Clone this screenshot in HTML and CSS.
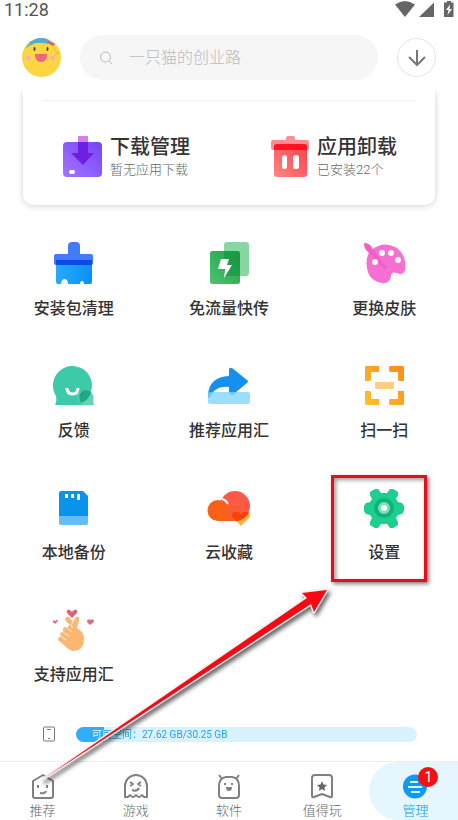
FILE: index.html
```html
<!DOCTYPE html>
<html lang="zh-CN">
<head>
    <meta charset="UTF-8">
    <meta name="viewport" content="width=device-width, initial-scale=1.0">
    <title>管理</title>
    <link rel="stylesheet" href="styles.css">
</head>
<body>
    <div class="status-bar">
        <span class="clock">11:28</span>
        <svg class="status-icons" width="60" height="18" viewBox="0 0 60 18" fill="#666">
            <path d="M1 4.500Q11 -2.500 21 4.500L11 17Z"/>
            <path d="M25 17L40 2.500V17Z"/>
            <path d="M50 2.500H53V1H57V2.500H59.500V17H50Z"/>
            <path d="M56 4.500L52 10H54.500L53.500 15L58 9H55.500Z" fill="#fff"/>
        </svg>
    </div>

    <header class="header">
        <a href="#" class="avatar" aria-label="我的">
            <svg width="39" height="39" viewBox="0 0 39 39">
                <circle cx="19.500" cy="19.500" r="19.500" fill="#fbd641"/>
                <path d="M3 11Q5 6 9 3L12 6Q7 8 3 11Z" fill="#8fc55c"/>
                <path d="M8 4Q19 -4 28 3L26 6Q17 3 7 7Z" fill="#55a9dc"/>
                <path d="M27 3L33 6L31 8L26 5Z" fill="#c85a86"/>
                <path d="M31 8L35 15L38 15M35 15L32 18" fill="none" stroke="#f4b545"/>
                <ellipse cx="12.500" cy="11" rx="1" ry="2" fill="#5a3320"/>
                <ellipse cx="25.500" cy="11" rx="1" ry="2" fill="#5a3320"/>
                <path d="M13 16H25Q25 24 19 24Q13 24 13 16Z" fill="#ee6480"/>
                <circle cx="6.500" cy="20" r="2.500" fill="#f8b0a8"/>
                <circle cx="30.500" cy="20" r="2.500" fill="#f8b0a8"/>
            </svg>
        </a>
        <label class="search">
            <svg width="14" height="14" viewBox="0 0 14 14" fill="none" stroke="#bbb">
                <circle cx="6.500" cy="6" r="5"/>
                <path d="M10 10L13 13"/>
            </svg>
            <input type="text" placeholder="一只猫的创业路" aria-label="搜索">
        </label>
        <button type="button" class="download-btn" aria-label="下载">
            <svg width="20" height="20" viewBox="0 0 20 20" fill="none" stroke="#777" stroke-width="2">
                <path d="M10 2V17M2 9L10 17L18 9"/>
            </svg>
        </button>
    </header>

    <main class="main">
        <section class="card">
            <a href="#" class="card-item">
                <svg width="40" height="42" viewBox="0 0 40 42">
                    <defs>
                        <linearGradient id="purple" x1="1" y1="0" x2="0" y2="1">
                            <stop offset="0" stop-color="#7344f7"/>
                            <stop offset="1" stop-color="#a575ff"/>
                        </linearGradient>
                    </defs>
                    <rect x="1" y="6" width="39" height="35" rx="4" fill="url(#purple)"/>
                    <path d="M16 0H26V6H16Z" fill="#d680ea"/>
                    <path d="M16 6H26V17H32L21 29L9 17H16Z" fill="#6f1fe0"/>
                    <rect x="7" y="34" width="6" height="4" rx="2" fill="#fff"/>
                </svg>
                <span class="card-text">
                    <strong>下载管理</strong>
                    <small>暂无应用下载</small>
                </span>
            </a>
            <a href="#" class="card-item">
                <svg width="40" height="42" viewBox="0 0 40 42">
                    <defs>
                        <linearGradient id="red" x1="1" y1="0" x2="0" y2="1">
                            <stop offset="0" stop-color="#fb3f4b"/>
                            <stop offset="1" stop-color="#ff8582"/>
                        </linearGradient>
                    </defs>
                    <path d="M4 4H17V2Q17 0 19 0H24Q26 0 26 2V4H38Q40 4 40 6V12Q40 14 38 14H4Q2 14 2 12V6Q2 4 4 4Z" fill="#fc8d92"/>
                    <rect x="5" y="8" width="33" height="33" rx="3" fill="url(#red)"/>
                    <path d="M5 14V11Q5 8 8 8H35Q38 8 38 11V14Z" fill="#fb1522"/>
                    <rect x="13" y="19" width="5" height="14" rx="2.500" fill="#fff"/>
                    <rect x="24" y="19" width="6" height="14" rx="2.500" fill="#fff"/>
                </svg>
                <span class="card-text">
                    <strong>应用卸载</strong>
                    <small>已安装22个</small>
                </span>
            </a>
        </section>

        <nav class="tools">
            <a href="#" class="tool">
                <svg viewBox="0 0 44 44">
                    <defs>
                        <linearGradient id="blue">
                            <stop offset="0" stop-color="#27a9ff"/>
                            <stop offset="1" stop-color="#0a91f8"/>
                        </linearGradient>
                    </defs>
                    <path d="M16 12V4Q16 0 20 0H24Q28 0 28 4V12H39Q41 12 41 14V21Q41 23 39 23H4Q2 23 2 21V14Q2 12 4 12Z" fill="#417bfb"/>
                    <path d="M4 18H40V40Q40 42 38 42H32C32 38 28 38 28 42H16C16 35 9 36 9 42H6Q4 42 4 40Z" fill="url(#blue)"/>
                    <path d="M4 18H40V23H4Z" fill="#0b4be5"/>
                </svg>
                <span>安装包清理</span>
            </a>
            <a href="#" class="tool">
                <svg viewBox="0 0 44 44">
                    <defs>
                        <linearGradient id="green" x1="1" y1="0" x2="0" y2="1">
                            <stop offset="0" stop-color="#159440"/>
                            <stop offset="1" stop-color="#58c979"/>
                        </linearGradient>
                    </defs>
                    <rect x="17" y="0" width="25" height="34" rx="3" fill="#88d7a2"/>
                    <rect x="3" y="9" width="30" height="33" rx="3" fill="#35b45b"/>
                    <rect x="3" y="9" width="30" height="33" rx="3" fill="url(#green)" opacity=".7"/>
                    <path d="M17 9H30Q33 9 33 12V34H20Q17 34 17 31Z" fill="#12973e" opacity=".6"/>
                    <path d="M14 17H22L20 23H25L17 36L18 27H11Z" fill="#fff"/>
                </svg>
                <span>免流量快传</span>
            </a>
            <a href="#" class="tool">
                <svg viewBox="0 0 44 44">
                    <path d="M9 8Q22 -2 35 6Q45 14 43 28Q41 34 35 31Q29 29 29 34Q28 42 20 41Q7 39 5 26Q3 15 9 8Z" fill="#f66fd2"/>
                    <path d="M2 1Q8 1 10 6L25 26L23 28L6 10Q2 7 2 1Z" fill="#f25fc4"/>
                    <circle cx="20" cy="11" r="3" fill="#fff"/>
                    <circle cx="29" cy="11" r="3" fill="#fff"/>
                    <circle cx="36" cy="18" r="3" fill="#fff"/>
                    <circle cx="13" cy="20" r="3" fill="#fff"/>
                </svg>
                <span>更换皮肤</span>
            </a>
            <a href="#" class="tool">
                <svg viewBox="0 0 44 44">
                    <path d="M3 41Q5 38 4 32A19.500 19.500 0 1 1 38 30L32 41Z" fill="#3dcaa8"/>
                    <path d="M34 26A8 8 0 0 1 41 37L42 41H33A7.500 7.500 0 0 1 34 26Z" fill="#62d2b8"/>
                    <path d="M39 28Q37 36 29 39Q25 32 30 27Q35 25 39 28Z" fill="#20a783"/>
                    <path d="M15 24Q15 30 20.500 30Q26 30 26 24" fill="none" stroke="#fff" stroke-width="3"/>
                </svg>
                <span>反馈</span>
            </a>
            <a href="#" class="tool">
                <svg viewBox="0 0 44 44">
                    <rect x="1" y="28" width="42" height="12" rx="2" fill="#9adfff"/>
                    <path d="M1 31Q2 13 22 12V6Q22 3 25 4L40 16Q42 17 40 19L28 29H22V23Q12 22 6 28Q3 32 1 31Z" fill="#1491ef"/>
                    <path d="M1 29Q1 28 6 28Q4 33 1 34ZM22 28H29L26 31Q22 31 22 28Z" fill="#6cc6f8"/>
                </svg>
                <span>推荐应用汇</span>
            </a>
            <a href="#" class="tool">
                <svg viewBox="0 0 44 44">
                    <defs>
                        <linearGradient id="orange" x1="1" y1="0" x2="0" y2="1">
                            <stop offset="0" stop-color="#fb8c1d"/>
                            <stop offset="1" stop-color="#ffc02a"/>
                        </linearGradient>
                    </defs>
                    <path d="M4 2H17V8H9V16L8 17H3V3ZM28 2H41L42 3V17H37L36 16V8H28L27 7V3ZM3 27H8L9 28V35H17V41H4L3 40ZM36 27H42V40L41 41H28L27 40V36L28 35H36Z" fill="url(#orange)"/>
                    <rect x="13" y="18" width="19" height="7" rx="1" fill="#fdcd86"/>
                </svg>
                <span>扫一扫</span>
            </a>
            <a href="#" class="tool">
                <svg viewBox="0 0 44 44">
                    <path d="M9 5H31L36 10V30H7V7Q7 5 9 5Z" fill="#0993ec"/>
                    <path d="M7 30H36V37Q36 39 34 39H9Q7 39 7 37Z" fill="#64bdf7"/>
                    <path d="M13 8H16V12H13ZM19 8H22V12H19ZM25 8H28V14H25Z" fill="#fff"/>
                </svg>
                <span>本地备份</span>
            </a>
            <a href="#" class="tool">
                <svg viewBox="0 0 44 44">
                    <path d="M34 40L26 32Q24 28 28 26H42Q44 30 42 32Z" fill="#ffb444"/>
                    <circle cx="28" cy="20" r="15" fill="#fb5a46"/>
                    <path d="M11 14Q18 14 21 20L30 35H11A10.500 10.500 0 0 1 11 14Z" fill="#f96119"/>
                    <path d="M20 20H34L36 32Q33 35 28 35H20Z" fill="#fa5c31"/>
                    <path d="M34 28Q31 25 27 26Q23 29 27 33L29 35Q37 34 42 27Q37 24 34 28Z" fill="#f9410c"/>
                    <path d="M15 13Q19 14 21 18" fill="none" stroke="#fff" stroke-width="2"/>
                </svg>
                <span>云收藏</span>
            </a>
            <a href="#" class="tool marked">
                <svg viewBox="0 0 44 44">
                    <path d="M19 7H25L28 3H31L36 6V9L34 13L36 16L40 17L42 20V25L40 28L36 29L34 32L36 36V39L31 42H28L25 38H19L16 42H13L8 39V36L10 32L8 29L4 28L2 25V20L4 17L8 16L10 13L8 9V6L13 3H16Z" fill="#1dce91"/>
                    <circle cx="22" cy="22" r="10" fill="#10b377"/>
                    <circle cx="22" cy="22" r="6" fill="#7fdfbd"/>
                    <circle cx="22" cy="22" r="3" fill="#fff"/>
                </svg>
                <span>设置</span>
            </a>
            <a href="#" class="tool">
                <svg viewBox="0 0 44 44">
                    <path d="M20 10L15 5Q14 1 18 2L20 4L22 2Q26 1 25 5Z" fill="#d9636e"/>
                    <path d="M3 16L1 14Q0 11 3 13Q6 11 6 13ZM38 17L35 14Q35 10 38 12Q42 10 42 14Z" fill="#d9737b"/>
                    <path d="M13 12Q13 8 17 9L21 14L24 9Q28 8 27 12L25 20Q32 24 32 31Q32 42 22 43Q18 43 13 38L6 32Q6 28 10 29Q6 25 10 24L12 25Q9 19 14 19L16 21Q15 17 18 17Z" fill="#fcb673"/>
                    <path d="M10 29L14 32M12 25L17 28M16 21L20 24M18 17L21 20M21 14L19 17" fill="none" stroke="#fff0df"/>
                </svg>
                <span>支持应用汇</span>
            </a>
        </nav>

        <div class="storage">
            <svg width="14" height="16" viewBox="0 0 14 16" fill="none" stroke="#777">
                <rect x="1.500" y="1" width="11" height="14" rx="1"/>
                <path d="M5 3.500H9M6 12.500H8"/>
            </svg>
            <div class="storage-bar">
                <div class="storage-used" style="width: 8.3%"></div>
                <span class="storage-text">可用空间：27.62 GB/30.25 GB</span>
            </div>
        </div>
    </main>

    <nav class="tabs">
        <a href="#" class="tab">
            <svg viewBox="0 0 26 26">
                <path d="M3 8L13 2L23 8V23Q23 25 21 25H5Q3 25 3 23Z"/>
                <path d="M8 12V15M17 12V15M10 20Q15 21 16 18"/>
            </svg>
            <span>推荐</span>
        </a>
        <a href="#" class="tab">
            <svg viewBox="0 0 26 26">
                <path d="M2 24V13A11 11 0 0 1 24 13V24Q21 25 19 22Q16 26 13 22Q10 26 7 22Q5 25 2 24Z"/>
                <path d="M7 9L10 11L7 13M18 9L15 11L18 13M9 17Q14 19 16 15"/>
            </svg>
            <span>游戏</span>
        </a>
        <a href="#" class="tab">
            <svg viewBox="0 0 26 26">
                <path d="M3 13Q3 5 10 4H16Q23 5 23 13V22Q23 25 20 25H6Q3 25 3 22ZM6 6L3 2M20 6L23 2"/>
                <path d="M9 10V12M16 10V12"/>
                <path d="M10 14H16Q16 18 13 18Q10 18 10 14Z" fill="#808080" stroke="none"/>
            </svg>
            <span>软件</span>
        </a>
        <a href="#" class="tab">
            <svg viewBox="0 0 26 26">
                <path d="M3 5Q3 2 6 2H20Q23 2 23 5V23Q23 25 21 24L13 21L5 24Q3 25 3 23Z"/>
                <path d="M13 8L14.500 11.500L18 12L15.500 14.500L16 18L13 16L10 18L10.500 14.500L8 12L11.500 11.500Z" fill="#666" stroke="none"/>
            </svg>
            <span>值得玩</span>
        </a>
        <a href="#" class="tab active">
            <svg viewBox="0 0 26 26">
                <circle cx="13" cy="13.500" r="12" fill="#0b9bf5" stroke="none"/>
                <path d="M8 9H16M6 14H20M9 19H18" stroke="#d9f3ff"/>
            </svg>
            <span>管理</span>
            <b class="badge">1</b>
        </a>
    </nav>

    <!-- arrow pointing at the settings entry -->
    <svg class="arrow" width="300" height="206" viewBox="0 0 300 206">
        <path d="M11 191L275 10L270 5L295 2L282 24L279 16Z" fill="#fb0714" stroke="#f3eeee" stroke-width="3" stroke-linejoin="round" paint-order="stroke"/>
    </svg>
</body>
</html>
```

FILE: styles.css
```css
*,
*::before,
*::after {
    box-sizing: border-box;
}
body {
    position: relative;
    display: flex;
    flex-direction: column;
    min-height: 100vh;
    margin: 0;
    overflow-x: hidden;
    background-color: #fff;
    color: #333;
    font-family: Roboto, "Noto Sans CJK SC", sans-serif;
}
a {
    color: inherit;
    text-decoration: none;
}
svg {
    display: block;
    flex-shrink: 0;
}
.status-bar {
    display: flex;
    justify-content: space-between;
    height: 20px;
    padding: 0 4px;
}
.clock {
    font-size: 18px;
    line-height: 20px;
    color: #555;
}

/* Header */
.header {
    position: relative;
    z-index: 1;
    display: flex;
    align-items: center;
    gap: 19px;
    padding: 15px 22px 10px;
    background-color: #fff;
}
.search {
    display: flex;
    flex: 1;
    align-items: center;
    gap: 16px;
    min-width: 0;
    height: 45px;
    padding: 0 19px;
    border-radius: 23px;
    background-color: #f6f6f6;
}
.search input {
    flex: 1;
    min-width: 0;
    padding: 0;
    border: none;
    outline: none;
    background: none;
    font-family: inherit;
    font-size: 16px;
    font-weight: 300;
}
.search input::placeholder {
    color: #bbb;
}
.download-btn {
    display: flex;
    align-items: center;
    justify-content: center;
    width: 39px;
    height: 39px;
    padding: 0;
    border: 1px solid #e4e4e4;
    border-radius: 50%;
    background-color: #fff;
}

/* Content */
.main {
    flex: 1;
}
.card {
    display: flex;
    flex-wrap: wrap;
    margin: 0 23px;
    padding-bottom: 26px;
    border-radius: 0 0 10px 10px;
    box-shadow: 0 1px 6px rgba(0, 0, 0, 0.18);
}
.card::before {
    content: "";
    flex: 0 0 calc(100% - 40px);
    margin: 10px 20px 33px;
    border-top: 1px solid #f0f0f0;
}
.card-item {
    display: flex;
    flex: 0 0 50%;
    align-items: center;
    gap: 8px;
    padding-left: 40px;
}
.card-item:first-of-type {
    padding-left: 39px;
}
.card-text {
    display: flex;
    flex-direction: column;
    white-space: nowrap;
}
.card-text strong {
    font-size: 20px;
    font-weight: 500;
    line-height: 26px;
}
.card-text small {
    font-size: 13px;
    font-weight: 300;
    line-height: 19px;
    color: #666;
}
.tools {
    display: grid;
    grid-template-columns: repeat(3, 1fr);
    row-gap: 44px;
    margin: 37px -4px 0;
}
.tool {
    position: relative;
    display: flex;
    flex-direction: column;
    align-items: center;
    gap: 12px;
    font-size: 16px;
    font-weight: 500;
    line-height: 22px;
}
.tool svg {
    width: 44px;
    height: 44px;
}
.marked::after {
    content: "";
    position: absolute;
    top: -11px;
    left: 50%;
    width: 96px;
    height: 107px;
    margin-left: -53px;
    border: 3px solid #e50f1b;
    box-shadow: 2px 2px 4px rgba(0, 0, 0, 0.5), inset 2px 2px 4px rgba(0, 0, 0, 0.4);
}

/* Storage */
.storage {
    display: flex;
    align-items: center;
    gap: 20px;
    margin: 40px 41px 18px 42px;
}
.storage-bar {
    position: relative;
    flex: 1;
    overflow: hidden;
    height: 15px;
    border-radius: 8px;
    background-color: #d9f2ff;
}
.storage-used {
    height: 100%;
    background-color: #2eaef7;
}
.storage-text {
    position: absolute;
    top: 0;
    left: 16px;
    font-size: 10px;
    line-height: 15px;
    background: linear-gradient(90deg, #fff 12px, #1a9fe8 12px);
    -webkit-background-clip: text;
    background-clip: text;
    color: transparent;
}

/* Bottom tabs */
.tabs {
    display: flex;
    margin: 0 -4px;
    border-top: 1px solid #eee;
}
.tab {
    position: relative;
    display: flex;
    flex: 1;
    flex-direction: column;
    align-items: center;
    gap: 4px;
    padding: 11px 0 1px;
    font-size: 13px;
    font-weight: 300;
    line-height: 16px;
    color: #666;
}
.tab svg {
    width: 26px;
    height: 26px;
    fill: none;
    stroke: #808080;
    stroke-width: 2;
    stroke-linejoin: round;
}
.tab.active {
    border-radius: 30px 0 0 30px;
    background-color: #e5f6ff;
    color: #0b9bf5;
}
.badge {
    position: absolute;
    top: 5px;
    left: 50%;
    width: 20px;
    height: 20px;
    margin-left: 3px;
    border-radius: 50%;
    background-color: #fb0d12;
    color: #fff;
    font-size: 14px;
    font-weight: 400;
    line-height: 20px;
    text-align: center;
}

/* Overlay arrow */
.arrow {
    position: absolute;
    top: 588px;
    left: 32px;
    filter: drop-shadow(2px 3px 2px rgba(0, 0, 0, 0.6));
    pointer-events: none;
}
```
